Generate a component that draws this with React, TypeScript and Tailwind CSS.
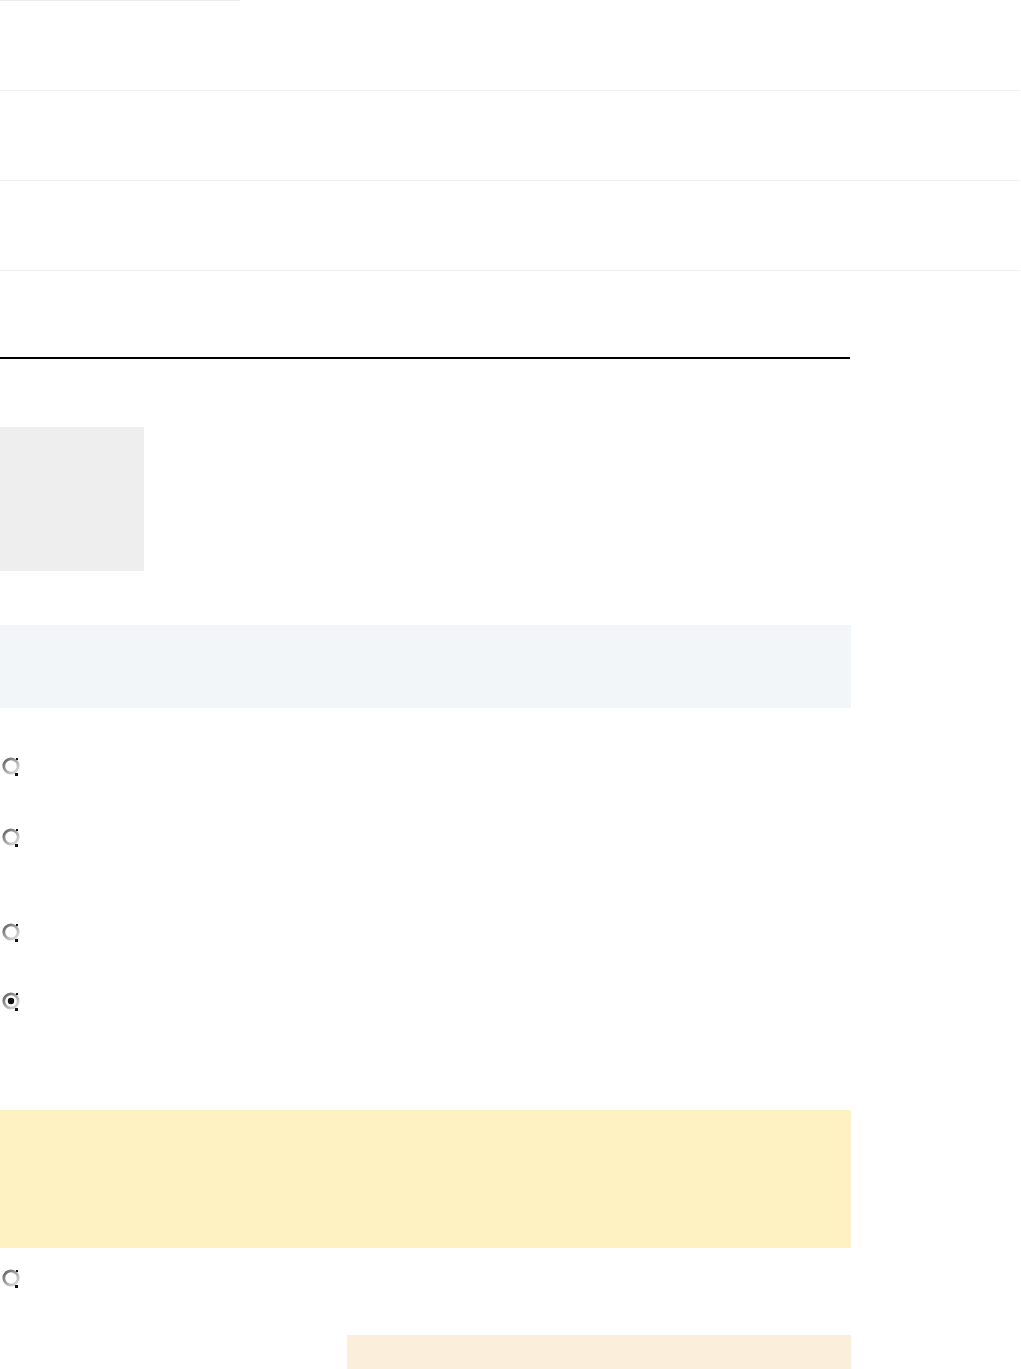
import React from 'react';

function Radio({ checked = false }: { checked?: boolean }) {
  const id = checked ? 'rg-on' : 'rg-off';
  return (
    <svg width="20" height="22" viewBox="0 0 20 22" className="block">
      <defs>
        <linearGradient id={id} x1="0" y1="0" x2="1" y2="1">
          <stop offset="0" stopColor="#5a5a5a" />
          <stop offset="0.5" stopColor="#a8a8a8" />
          <stop offset="1" stopColor="#e2e2e2" />
        </linearGradient>
      </defs>
      <circle cx="10" cy="11" r="7.2" fill="#fff" stroke={`url(#${id})`} strokeWidth="2.8" />
      <rect x="15" y="3" width="2" height="2" fill="#111" />
      <rect x="14" y="18" width="3" height="3" fill="#111" />
      {checked && <circle cx="10" cy="11" r="3.2" fill="#111" />}
    </svg>
  );
}

export default function App() {
  return (
    <div className="w-[1021px] bg-white" style={{ fontFamily: '"Liberation Sans", Arial, sans-serif' }}>
      {/* top rows */}
      <div className="h-px w-[240px] bg-[#e9eded]" />
      <div className="h-[89px]" />
      <div className="h-px w-[1020px] bg-[#eef0f0]" />
      <div className="h-[89px]" />
      <div className="h-px w-[1020px] bg-[#eef1f1]" />
      <div className="h-[89px]" />
      <div className="h-px w-[1020px] bg-[#eef0f0]" />

      {/* heading rule */}
      <div className="h-[86px]" />
      <div className="h-[2px] w-[850px] bg-black" />

      {/* thumbnail */}
      <div className="mt-[68px] h-[144px] w-[144px] bg-[#eeeeee]" />

      {/* note */}
      <div className="mt-[54px] h-[83px] w-[851px] bg-[#f2f6f9]" />

      {/* options */}
      <div className="mt-[47px] flex flex-col pl-[1px]">
        <Radio />
        <div className="mt-[49px]">
          <Radio />
        </div>
        <div className="mt-[73px]">
          <Radio />
        </div>
        <div className="mt-[47px]">
          <Radio checked />
        </div>
      </div>

      {/* warning */}
      <div className="mt-[98px] h-[138px] w-[851px] bg-[#fff2c2]" />

      <div className="mt-[19px] pl-[1px]">
        <Radio />
      </div>

      <div className="mt-[46px] flex">
        <div className="ml-[347px] h-[40px] w-[504px] bg-[#fbeedb]" />
      </div>
    </div>
  );
}
